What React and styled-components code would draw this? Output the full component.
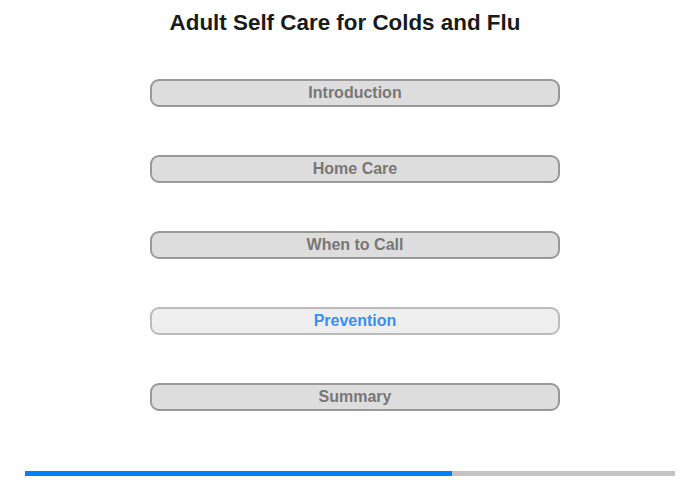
import React from "react";
import styled, { createGlobalStyle } from "styled-components";

const Global = createGlobalStyle`
  html, body { margin: 0; padding: 0; background: #fff; }
  body { font-family: "Liberation Sans", Arial, sans-serif; width: 700px; height: 480px; overflow: hidden; }
`;

const Page = styled.div`
  width: 700px;
  height: 480px;
  display: flex;
  flex-direction: column;
  box-sizing: border-box;
`;

const Title = styled.h1`
  margin: 0;
  padding: 10px 10px 0 0;
  font-size: 22.4px;
  line-height: 26px;
  font-weight: bold;
  color: #1a1a1a;
  text-align: center;
`;

const Menu = styled.nav`
  display: flex;
  flex-direction: column;
  gap: 48px;
  margin: 43px 0 0 150px;
  width: 410px;
`;

const Item = styled.div`
  box-sizing: border-box;
  height: 28px;
  border: 2px solid ${(p) => (p.$active ? "#bbbbbb" : "#999999")};
  border-radius: 9px;
  background: ${(p) => (p.$active ? "#eeeeee" : "#dddddd")};
  color: ${(p) => (p.$active ? "#3a8ef0" : "#777777")};
  font-size: 16px;
  font-weight: bold;
  display: flex;
  align-items: center;
  justify-content: center;
`;

const Progress = styled.div`
  margin: auto 25px 4px 25px;
  height: 5px;
  background: #c3c3c3;
  display: flex;
`;

const Fill = styled.div`
  height: 100%;
  background: #0080ff;
`;

const items = ["Introduction", "Home Care", "When to Call", "Prevention", "Summary"];

export default function App() {
  return (
    <>
      <Global />
      <Page>
        <Title>Adult Self Care for Colds and Flu</Title>
        <Menu>
          {items.map((t) => (
            <Item key={t} $active={t === "Prevention"}>{t}</Item>
          ))}
        </Menu>
        <Progress>
          <Fill style={{ width: `${(427 / 650) * 100}%` }} />
        </Progress>
      </Page>
    </>
  );
}
